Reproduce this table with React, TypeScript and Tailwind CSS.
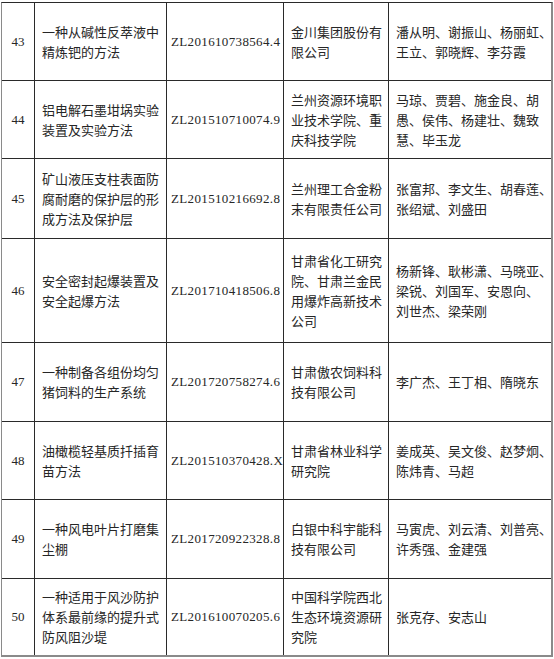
import React from "react";

type Row = {
  no: string;
  title: string[];
  zl: string;
  org: string[];
  people: string[];
  h: string;
};

const rows: Row[] = [
  {
    no: "43",
    title: ["一种从碱性反萃液中", "精炼钯的方法"],
    zl: "ZL201610738564.4",
    org: ["金川集团股份有", "限公司"],
    people: ["潘从明、谢振山、杨丽虹、", "王立、郭晓辉、李芬霞"],
    h: "h-[78px]",
  },
  {
    no: "44",
    title: ["铝电解石墨坩埚实验", "装置及实验方法"],
    zl: "ZL201510710074.9",
    org: ["兰州资源环境职", "业技术学院、重", "庆科技学院"],
    people: ["马琼、贾碧、施金良、胡", "愚、侯伟、杨建壮、魏致", "慧、毕玉龙"],
    h: "h-[78px]",
  },
  {
    no: "45",
    title: ["矿山液压支柱表面防", "腐耐磨的保护层的形", "成方法及保护层"],
    zl: "ZL201510216692.8",
    org: ["兰州理工合金粉", "末有限责任公司"],
    people: ["张富邦、李文生、胡春莲、", "张绍斌、刘盛田"],
    h: "h-[80px]",
  },
  {
    no: "46",
    title: ["安全密封起爆装置及", "安全起爆方法"],
    zl: "ZL201710418506.8",
    org: ["甘肃省化工研究", "院、甘肃兰金民", "用爆炸高新技术", "公司"],
    people: ["杨新锋、耿彬潇、马晓亚、", "梁锐、刘国军、安恩向、", "刘世杰、梁荣刚"],
    h: "h-[104px]",
  },
  {
    no: "47",
    title: ["一种制备各组份均匀", "猪饲料的生产系统"],
    zl: "ZL201720758274.6",
    org: ["甘肃傲农饲料科", "技有限公司"],
    people: ["李广杰、王丁相、隋晓东"],
    h: "h-[79px]",
  },
  {
    no: "48",
    title: ["油橄榄轻基质扦插育", "苗方法"],
    zl: "ZL201510370428.X",
    org: ["甘肃省林业科学", "研究院"],
    people: ["姜成英、吴文俊、赵梦炯、", "陈炜青、马超"],
    h: "h-[78px]",
  },
  {
    no: "49",
    title: ["一种风电叶片打磨集", "尘棚"],
    zl: "ZL201720922328.8",
    org: ["白银中科宇能科", "技有限公司"],
    people: ["马寅虎、刘云清、刘普亮、", "许秀强、金建强"],
    h: "h-[79px]",
  },
  {
    no: "50",
    title: ["一种适用于风沙防护", "体系最前缘的提升式", "防风阻沙堤"],
    zl: "ZL201610070205.6",
    org: ["中国科学院西北", "生态环境资源研", "究院"],
    people: ["张克存、安志山"],
    h: "h-[76px]",
  },
];

const cjk = "font-['Noto_Sans_CJK_SC','Noto_Sans',sans-serif]";
const serif = "font-['Liberation_Serif','Noto_Sans_CJK_SC',serif]";

function Lines({ lines }: { lines: string[] }) {
  return (
    <div className="flex flex-col">
      {lines.map((l, i) => (
        <div key={i} className="whitespace-nowrap leading-[20px]">
          {l}
        </div>
      ))}
    </div>
  );
}

export default function App() {
  return (
    <div className="w-[554px] h-[659px] bg-white pt-[2px] pl-[1px]">
      <div
        className={`w-[552px] border-l border-t border-r-2 border-b-2 border-l-[#8a8a8a] border-t-[#2a2a2a] border-r-[#8a8a8a] border-b-[#8a8a8a] text-[13px] text-[#262626] ${cjk}`}
      >
        {rows.map((r, idx) => {
          const last = idx === rows.length - 1;
          const rb = last ? "" : "border-b border-b-[#2a2a2a]";
          return (
            <div key={r.no} className={`flex ${r.h} ${rb}`}>
              <div
                className={`w-[33px] shrink-0 border-r border-r-[#2a2a2a] flex items-center justify-center ${serif}`}
              >
                {r.no}
              </div>
              <div className="w-[132px] shrink-0 border-r border-r-[#2a2a2a] flex items-center pl-[7px]">
                <Lines lines={r.title} />
              </div>
              <div
                className={`w-[117px] shrink-0 border-r border-r-[#2a2a2a] flex items-center pl-[4px] tracking-[0.35px] whitespace-nowrap overflow-visible ${serif}`}
              >
                {r.zl}
              </div>
              <div className="w-[105px] shrink-0 border-r border-r-[#2a2a2a] flex items-center pl-[7px]">
                <Lines lines={r.org} />
              </div>
              <div className="w-[162px] shrink-0 flex items-center pl-[7px]">
                <Lines lines={r.people} />
              </div>
            </div>
          );
        })}
      </div>
    </div>
  );
}
